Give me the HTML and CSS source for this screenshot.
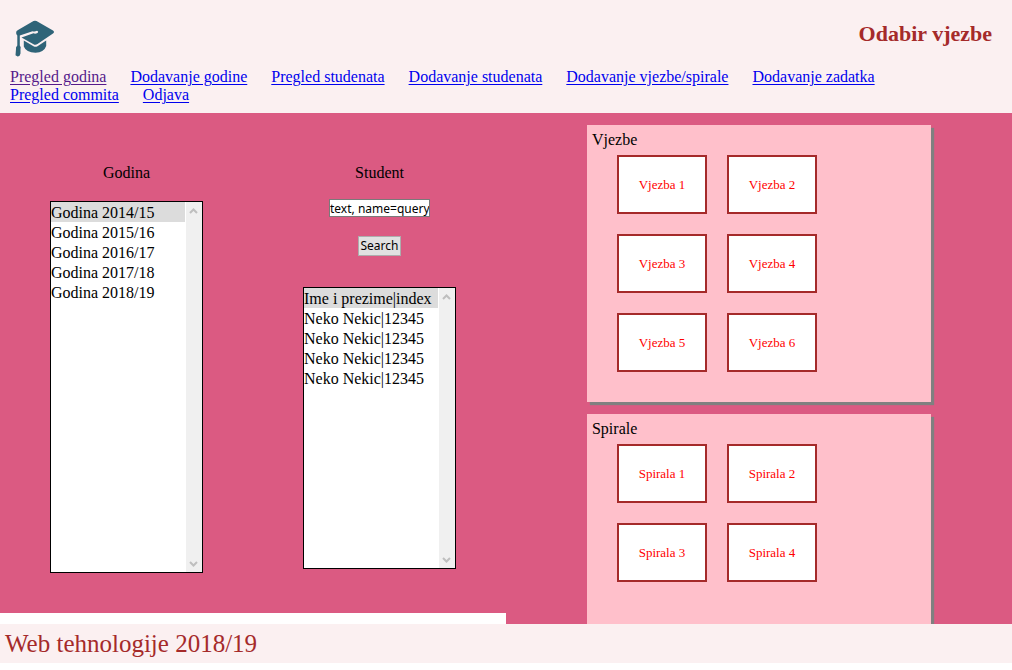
FILE: index.html
```html
<!DOCTYPE html>
<html lang="bs">
<head>
<meta charset="utf-8">
<title>Odabir vjezbe</title>
<link rel="stylesheet" href="styles.css">
</head>
<body>
<header class="header">
  <div class="top">
    <svg class="logo" viewBox="0 0 40 38" aria-hidden="true">
      <path fill="#2f6478" d="M18.500 1Q20 .4 21.500 1L38 10.500Q40 12 38 13.500L22.500 24Q20.500 25.500 18.500 24.300L6.500 17.500L18.500 13.200Q20 14.200 22.500 13Q24 11.500 22 10.800Q19.500 12 17.500 11.200L4.800 15.500V25.500Q6.300 27 5.500 29V33.500Q5.300 36 2.500 36.500L.5 35.300L1 29Q.5 27 2.300 25.500V15.500Q.8 14.500 1.200 12Q1.300 10.800 3 10Z"/>
      <path fill="#2f6478" d="M8.800 20.500L18.500 26.200Q20.500 27.300 22.500 26.200L31.200 20.500V26Q29 32.400 20.500 32.700Q11 32.400 8.800 26.500Z"/>
    </svg>
    <h1 class="title">Odabir vjezbe</h1>
  </div>
  <nav class="nav">
    <a class="visited" href="#godine">Pregled godina</a>
    <a href="#nova-godina">Dodavanje godine</a>
    <a href="#studenti">Pregled studenata</a>
    <a href="#novi-student">Dodavanje studenata</a>
    <a href="#nova-vjezba">Dodavanje vjezbe/spirale</a>
    <a href="#novi-zadatak">Dodavanje zadatka</a>
    <a href="#commiti">Pregled commita</a>
    <a href="#odjava">Odjava</a>
  </nav>
</header>
<main class="main">
  <form class="filters">
    <div class="column">
      <label class="label" for="godina">Godina</label>
      <div class="listbox listbox-tall">
        <select class="list" id="godina" size="5">
          <option class="current">Godina 2014/15</option>
          <option>Godina 2015/16</option>
          <option>Godina 2016/17</option>
          <option>Godina 2017/18</option>
          <option>Godina 2018/19</option>
        </select>
        <div class="scroll" aria-hidden="true">
          <svg class="arrow" viewBox="0 0 9 6"><path d="M1 5L4.500 1.500L8 5"/></svg>
          <svg class="arrow" viewBox="0 0 9 6"><path d="M1 1L4.500 4.500L8 1"/></svg>
        </div>
      </div>
    </div>
    <div class="column">
      <label class="label" for="student">Student</label>
      <input class="query" type="text" value="text, name=query" aria-label="Pretraga studenata">
      <button class="search" type="button">Search</button>
      <div class="listbox">
        <select class="list" id="student" size="5">
          <option class="current">Ime i prezime|index</option>
          <option>Neko Nekic|12345</option>
          <option>Neko Nekic|12345</option>
          <option>Neko Nekic|12345</option>
          <option>Neko Nekic|12345</option>
        </select>
        <div class="scroll" aria-hidden="true">
          <svg class="arrow" viewBox="0 0 9 6"><path d="M1 5L4.500 1.500L8 5"/></svg>
          <svg class="arrow" viewBox="0 0 9 6"><path d="M1 1L4.500 4.500L8 1"/></svg>
        </div>
      </div>
    </div>
  </form>
  <div class="panels">
    <section class="panel">
      <h2 class="heading">Vjezbe</h2>
      <div class="tiles">
        <a class="tile" href="#v1">Vjezba 1</a>
        <a class="tile" href="#v2">Vjezba 2</a>
        <a class="tile" href="#v3">Vjezba 3</a>
        <a class="tile" href="#v4">Vjezba 4</a>
        <a class="tile" href="#v5">Vjezba 5</a>
        <a class="tile" href="#v6">Vjezba 6</a>
      </div>
    </section>
    <section class="panel">
      <h2 class="heading">Spirale</h2>
      <div class="tiles">
        <a class="tile" href="#s1">Spirala 1</a>
        <a class="tile" href="#s2">Spirala 2</a>
        <a class="tile" href="#s3">Spirala 3</a>
        <a class="tile" href="#s4">Spirala 4</a>
      </div>
    </section>
  </div>
</main>
<footer class="footer">Web tehnologije 2018/19</footer>
</body>
</html>
```
FILE: styles.css
```css
* {
  box-sizing: border-box;
}

body {
  display: flex;
  flex-direction: column;
  height: 100vh;
  margin: 0;
  padding-bottom: 7px;
  background: #fff;
  color: #000;
  font: 16px/20px "Liberation Serif", "Times New Roman", serif;
}

.header {
  padding: 20px 10px 9px;
  background: #fbf0f1;
}

.top {
  display: flex;
  justify-content: space-between;
  align-items: flex-start;
  padding: 0 10px 0 5px;
}

.logo {
  width: 40px;
  height: 38px;
}

.title {
  margin: 0;
  color: brown;
  font-size: 22px;
  line-height: 28px;
}

.nav {
  display: flex;
  flex-wrap: wrap;
  column-gap: 24px;
  margin-top: 10px;
  line-height: 18px;
}

.nav a {
  color: #0000ee;
  text-underline-offset: 2px;
}

.nav .visited {
  color: #551a8b;
}

.main {
  display: flex;
  flex: 1;
  min-height: 0;
  overflow: hidden;
}

.filters {
  display: flex;
  width: 50%;
  align-self: flex-start;
  padding: 50px 0 40px;
  background: #db5a82;
}

.column {
  display: flex;
  flex: 1;
  flex-direction: column;
  align-items: center;
}

.label {
  margin-bottom: 16px;
}

.listbox {
  display: flex;
  width: 153px;
  height: 282px;
  border: 1px solid #000;
  background: #fff;
}

.listbox-tall {
  height: 372px;
  margin-top: 2px;
}

.list {
  flex: 1;
  min-width: 0;
  height: 100%;
  padding: 0;
  border: 0;
  border-radius: 0;
  outline: 0;
  appearance: none;
  background: #fff;
  color: #000;
  font: inherit;
  overflow: hidden;
}

.list option {
  min-height: 20px;
  padding: 2px 0 0;
}

.list .current {
  background: #dcdcdc;
}

.scroll {
  display: flex;
  flex-direction: column;
  justify-content: space-between;
  align-items: center;
  width: 17px;
  padding: 6px 1px 5px 0;
  border-left: 1px solid #fff;
  background: #f0f0f0;
}

.arrow {
  width: 9px;
  height: 6px;
  fill: none;
  stroke: #bfbfbf;
  stroke-width: 2;
}

.query {
  width: 101px;
  height: 18px;
  padding: 0;
  border: 1px solid #7a7a7a;
  background: #fff;
  color: #000;
  font: 12px "Noto Sans", sans-serif;
}

.search {
  height: 20px;
  margin: 19px 0 31px;
  padding: 0 2px;
  border: 1px solid #adadad;
  background: #e1e1e1;
  color: #000;
  font: 12px/18px "Noto Sans", sans-serif;
}

.panels {
  width: 50%;
  padding: 12px 8% 0;
  background: #db5a82;
}

.panel {
  min-height: 277px;
  margin-bottom: 12px;
  padding: 5px 5px 30px;
  background: pink;
  box-shadow: 3px 3px 1px gray;
}

.heading {
  margin: 0;
  font-size: 16px;
  font-weight: normal;
}

.tiles {
  display: grid;
  grid-template-columns: repeat(2, 90px);
  gap: 20px;
  padding: 5px 25px 0;
}

.tile {
  display: grid;
  place-items: center;
  height: 59px;
  border: 2px solid brown;
  background: #fff;
  color: red;
  font-size: 13px;
  text-decoration: none;
}

.footer {
  padding: 6px 5px 5px;
  background: #fbf0f1;
  color: brown;
  font-size: 25px;
  line-height: 28px;
}
```
